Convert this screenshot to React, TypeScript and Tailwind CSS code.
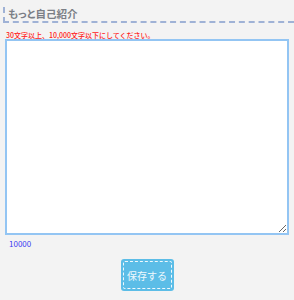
export default function App() {
  return (
    <div
      className="w-[294px] h-[300px] bg-[#f3f3f3] relative"
      style={{ fontFamily: '"Noto Sans CJK JP", "Noto Sans", sans-serif' }}
    >
      <div className="pt-[7px] pl-[3px]">
        <div className="border-l-2 border-b-2 border-dashed border-[#9fb2d6] h-[16px] pl-[3px] flex items-center">
          <span className="text-[10.5px] leading-none font-bold text-[#7b7f86] [font-feature-settings:'palt']">もっと自己紹介</span>
        </div>
      </div>
      <div className="pl-[6px] mt-[8px] text-[7px] leading-[8px] font-medium text-[#ff2020] whitespace-nowrap">
        30文字以上、10,000文字以下にしてください。
      </div>
      <div className="px-[5px]">
        <textarea className="block w-full h-[196px] bg-white border-2 border-[#93c5f3] resize-y outline-none"></textarea>
      </div>
      <div className="pl-[9px] mt-[5px] text-[8px] leading-none text-[#3d3bf2]">10000</div>
      <div className="flex justify-center mt-[11px]">
        <button className="w-[53px] h-[32px] bg-[#5cbde7] rounded-[3px] p-[2px]">
          <span className="w-full h-full border border-dashed border-white/90 rounded-[2px] flex items-center justify-center text-[10px] whitespace-nowrap text-white/90">
            保存する
          </span>
        </button>
      </div>
    </div>
  );
}
